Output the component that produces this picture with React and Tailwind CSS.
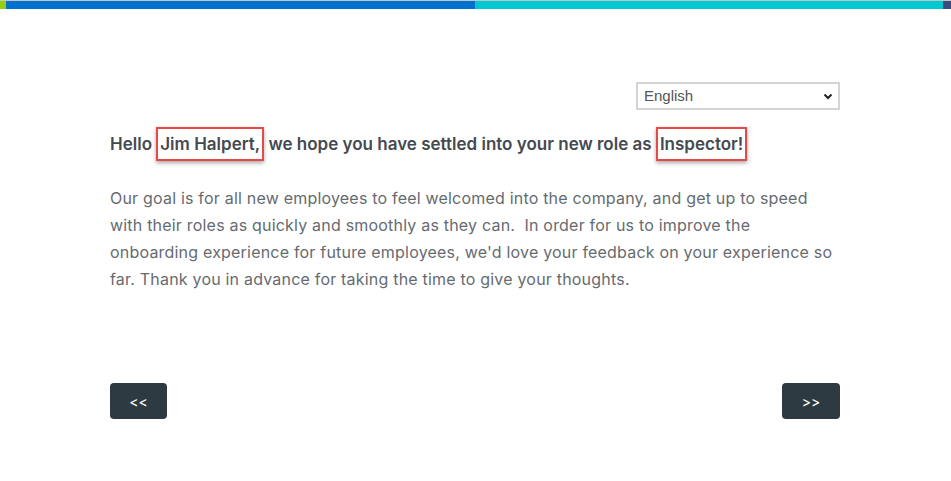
import React, { useState } from 'react';

const Highlight = ({ children }) => (
  <span className="border-2 border-[#e94848] px-[2px] py-[5px] shadow-[0_2px_4px_rgba(0,0,0,0.35)]">
    {children}
  </span>
);

export default function App() {
  const [lang, setLang] = useState('English');

  return (
    <div className="min-h-screen bg-white" style={{ fontFamily: 'Inter, "Noto Sans", sans-serif' }}>
      <div className="border-t border-[#c4c4c4] flex h-[9px]">
        <div className="w-[6px] bg-[#94cf12]"></div>
        <div className="flex-1 bg-[#0071ce]"></div>
        <div className="flex-1 bg-[#00c9d3]"></div>
        <div className="w-[8px] bg-[#3d4a7e]"></div>
      </div>

      <div className="w-[730px] ml-[110px] pt-[73px]">
        <div className="flex justify-end">
          <div className="relative w-[204px]">
            <select
              value={lang}
              onChange={(e) => setLang(e.target.value)}
              className="appearance-none w-full h-[28px] border-2 border-[#d4d4d4] bg-white pl-[6px] text-[15px] text-[#555] outline-none"
              style={{ fontFamily: '"Liberation Sans", Arial, sans-serif' }}
            >
              <option>English</option>
              <option>Español</option>
              <option>Français</option>
            </select>
            <svg className="absolute right-[7px] top-[11px] w-[10px] h-[7px] pointer-events-none" viewBox="0 0 10 7">
              <path d="M1.5 1.5 L5 5 L8.5 1.5" fill="none" stroke="#222" strokeWidth="2" />
            </svg>
          </div>
        </div>

        <h2 className="mt-[22px] text-[17px] leading-[24px] font-semibold text-[#454a50]">
          Hello <Highlight>Jim Halpert,</Highlight> we hope you have settled into your new role as <Highlight>Inspector!</Highlight>
        </h2>

        <p className="mt-[29px] text-[16px] leading-[27px] tracking-[0.2px] text-[#666b70]">
          Our goal is for all new employees to feel welcomed into the company, and get up to speed with their roles as quickly and smoothly as they can.&nbsp; In order for us to improve the onboarding experience for future employees, we'd love your feedback on your experience so far. Thank you in advance for taking the time to give your thoughts.
        </p>

        <div className="flex justify-between mt-[90px]">
          <button className="w-[57px] h-[36px] rounded-[4px] bg-[#2d3a41] text-white text-[14px]">&lt;&lt;</button>
          <button className="w-[58px] h-[36px] rounded-[4px] bg-[#2d3a41] text-white text-[14px]">&gt;&gt;</button>
        </div>
      </div>
    </div>
  );
}
